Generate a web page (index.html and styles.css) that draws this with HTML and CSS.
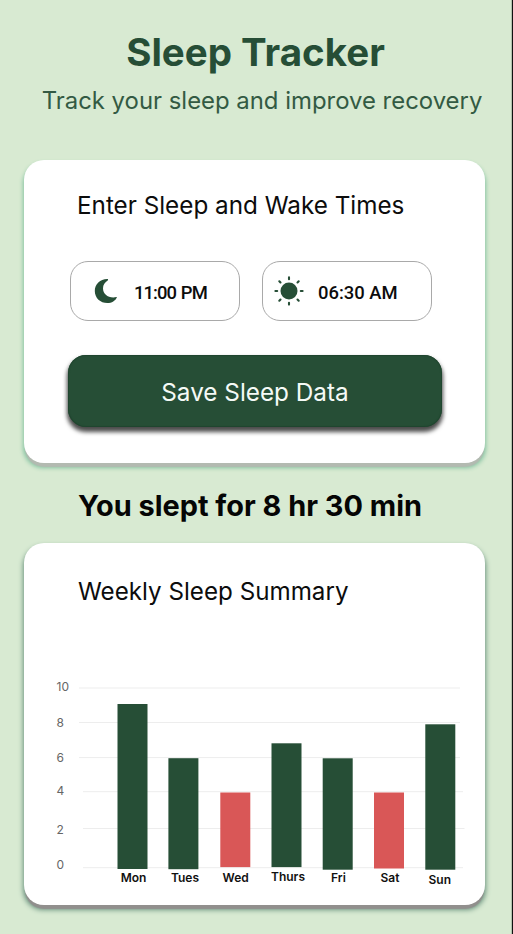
FILE: index.html
```
<!DOCTYPE html>
<html lang="en">
<head>
<meta charset="utf-8">
<title>Sleep Tracker</title>
<link rel="stylesheet" href="styles.css">
</head>
<body>
<main class="screen">
  <header class="header">
    <h1 class="title">Sleep Tracker</h1>
    <p class="subtitle">Track your sleep and improve recovery</p>
  </header>

  <section class="card entry-card">
    <h2 class="card-title">Enter Sleep and Wake Times</h2>
    <div class="times">
      <div class="time time-sleep">
        <svg class="moon" width="24" height="26" viewBox="0 0 24 26"><path fill="#264e36" d="M13.700 1C6.500 .7 .8 6 .8 12.900C.8 19.900 6.300 25 13.300 25C17.800 25 21.500 22.700 22.900 19.200C22.300 18.600 20.900 19.400 19.300 19.400C13.200 19.400 9 15.400 9 10.200C9 6.600 11 4.200 13.700 2.400C14.300 1.900 14.200 1.100 13.700 1Z"/></svg>
        <span class="time-text">11:00 PM</span>
      </div>
      <div class="time time-wake">
        <svg class="sun" width="30" height="30" viewBox="-15 -15 30 30"><circle r="8.500" fill="#264e36"/><path stroke="#264e36" stroke-width="2.100" stroke-linecap="round" d="M0-13.600V-11.800M0 11.800V13.600M-13.600 0H-11.800M11.800 0H13.600M-9.700-9.700L-8.500-8.500M8.500 8.500L9.700 9.700M-9.700 9.700L-8.500 8.500M8.500-8.500L9.700-9.700"/></svg>
        <span class="time-text">06:30 AM</span>
      </div>
    </div>
    <button class="save">Save Sleep Data</button>
  </section>

  <p class="result">You slept for 8 hr 30 min</p>

  <section class="card summary-card">
    <h2 class="card-title summary-title">Weekly Sleep Summary</h2>
    <svg class="chart" width="461" height="220" viewBox="24 670 461 220">
      <path class="grid" d="M79 688H460M79 722.500H460M79 757.600H460M83 791.700H463M83 828.500H464.500M83 867.700H463"/>
      <g class="axis">
        <text x="56.500" y="691.300">10</text>
        <text x="56.500" y="726.500">8</text>
        <text x="56.500" y="762">6</text>
        <text x="56.500" y="795">4</text>
        <text x="56.500" y="834">2</text>
        <text x="56.500" y="869.300">0</text>
      </g>
      <g class="bars">
        <rect x="117.500" y="704" width="30" height="165"/>
        <rect x="168.400" y="758.200" width="30" height="111"/>
        <rect class="low" x="220.300" y="792.500" width="30" height="74.600"/>
        <rect x="271.500" y="743.300" width="30" height="123.800"/>
        <rect x="322.700" y="758.300" width="30" height="111.400"/>
        <rect class="low" x="374" y="792.500" width="30" height="76"/>
        <rect x="425.300" y="724.300" width="30" height="145.400"/>
      </g>
      <g class="days">
        <text x="133.500" y="882.300">Mon</text>
        <text x="185" y="882.300">Tues</text>
        <text x="235.700" y="882.300">Wed</text>
        <text x="288" y="881.400">Thurs</text>
        <text x="338.400" y="882.300">Fri</text>
        <text x="390" y="882.300">Sat</text>
        <text x="439.800" y="883.500">Sun</text>
      </g>
    </svg>
  </section>
</main>
</body>
</html>
```
FILE: styles.css
```
* { box-sizing: border-box; margin: 0; padding: 0; }
body {
  font-family: Inter, "Liberation Sans", sans-serif;
  background: #d8ead2;
}
.screen {
  width: 513px;
  height: 934px;
  padding: 29px 26px 0 24px;
  border-right: 1px solid #111;
  box-shadow: inset -1px 0 0 #b3c2ae;
  overflow: hidden;
}
.header {
  height: 131px;
  text-align: center;
}
.title {
  padding-left: 1px;
  font-size: 38.5px;
  font-weight: 700;
  line-height: 46px;
  color: #264e36;
}
.subtitle {
  margin-top: 11px;
  margin-right: -6px;
  padding-left: 8px;
  font-size: 23.9px;
  font-weight: 400;
  line-height: 30px;
  white-space: nowrap;
  color: #335a43;
}
.card {
  width: 461px;
  border-radius: 20px;
  background: #fff;
}
.entry-card {
  height: 303px;
  padding: 30px 43px 0 44px;
  box-shadow: 0 5px 1px -1px #b3bab1, 0 4px 4px .5px #86c3a2;
}
.card-title {
  padding-left: 9px;
  font-size: 24.25px;
  font-weight: 400;
  line-height: 32px;
  white-space: nowrap;
  color: #0c0c0c;
}
.times {
  display: flex;
  gap: 22.5px;
  margin: 39px 0 0 1.5px;
}
.time {
  display: flex;
  align-items: center;
  width: 170px;
  height: 60px;
  border: 1px solid #a9a9a9;
  border-radius: 18px;
}
.time-sleep { padding-left: 23px; }
.time-wake { padding-left: 11px; }
.time-text {
  padding-top: 4px;
  font: 500 18.4px/22px Roboto, sans-serif;
  white-space: nowrap;
  color: #0c0c0c;
}
.time-sleep .time-text { margin-left: 16.5px; letter-spacing: -0.9px; word-spacing: 1px; }
.time-wake .time-text { margin-left: 14px; }
.save {
  display: block;
  width: 374px;
  height: 72px;
  margin-top: 34px;
  padding-top: 1px;
  border: 0;
  border-radius: 18px;
  background: #264e36;
  box-shadow: 0 4px 4px .5px rgba(0, 0, 0, .7), inset 0 0 1px 1px #20452f;
  font: 400 24.3px/30px Inter, sans-serif;
  color: #f5faf6;
}
.result {
  height: 80px;
  padding: 25px 0 0 54px;
  font-size: 28.9px;
  font-weight: 700;
  line-height: 36px;
  white-space: nowrap;
  color: #050505;
}
.summary-card {
  height: 362px;
  padding-top: 33px;
  box-shadow: 0 5px 1px -1px #918f8d, 0 4px 5px .5px #6d9480;
}
.summary-title { padding-left: 54px; font-size: 24.2px; }
.chart { display: block; margin-top: 62px; }
.grid { stroke: #ededed; stroke-width: 1; fill: none; }
.axis { font-size: 12px; fill: #666; }
.bars { fill: #264e36; }
.low { fill: #d95757; }
.days { font-size: 12px; font-weight: 600; text-anchor: middle; fill: #111; }
```
